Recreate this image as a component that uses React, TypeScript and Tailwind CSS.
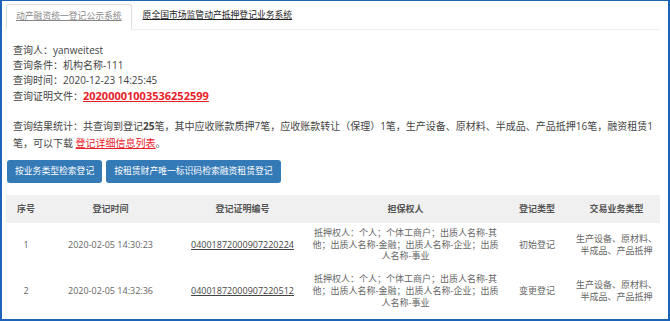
import React from "react";

const rows = [
  {
    no: "1",
    time: "2020-02-05 14:30:23",
    code: "04001872000907220224",
    type: "初始登记",
  },
  {
    no: "2",
    time: "2020-02-05 14:32:36",
    code: "04001872000907220512",
    type: "变更登记",
  },
];

export default function App() {
  return (
    <div className="w-[670px] h-[321px] bg-white border-[#1d63b8] border-x-2 border-t border-b-2 overflow-hidden font-['Open_Sans','Noto_Sans_CJK_SC',sans-serif] text-[#444]">
      <div className="pl-[4px] pr-[8px] pt-[3px]">
        {/* Tabs */}
        <div className="flex items-end h-[26px] border-b border-[#eeeeee]">
          <div className="h-[26px] -mb-px px-[9px] flex items-center border border-[#dddddd] border-b-white rounded-t-[3px] bg-white text-[8.8px] text-[#888] underline whitespace-nowrap">
            动产融资统一登记公示系统
          </div>
          <div className="h-[26px] pl-[11px] flex items-center text-[8.8px] text-[#222] underline whitespace-nowrap">
            原全国市场监管动产抵押登记业务系统
          </div>
        </div>

        {/* Info */}
        <div className="mt-[13px] pl-[7px] text-[10px] leading-[15px] whitespace-nowrap">
          <div>查询人：yanweitest</div>
          <div>查询条件：机构名称-111</div>
          <div>查询时间：2020-12-23 14:25:45</div>
          <div>
            查询证明文件：
            <span className="text-[11px] font-bold text-[#e8202a] underline">20200001003536252599</span>
          </div>
        </div>

        {/* Stats */}
        <div className="mt-[14px] pl-[7px] text-[10px] leading-[16.5px] whitespace-nowrap">
          <div>
            查询结果统计：共查询到登记<span className="font-bold">25</span>笔，其中应收账款质押7笔，应收账款转让（保理）1笔，生产设备、原材料、半成品、产品抵押16笔，融资租赁1
          </div>
          <div>
            笔，可以下载 <span className="text-[#e8202a] underline">登记详细信息列表</span>。
          </div>
        </div>

        {/* Buttons */}
        <div className="mt-[9px] ml-[1px] flex gap-[4px]">
          <div className="h-[23px] px-[8px] flex items-center rounded-[3px] bg-[#337ab7] text-white text-[8.8px] whitespace-nowrap">
            按业务类型检索登记
          </div>
          <div className="h-[23px] px-[8px] flex items-center rounded-[3px] bg-[#337ab7] text-white text-[8.8px] whitespace-nowrap">
            按租赁财产唯一标识码检索融资租赁登记
          </div>
        </div>

        {/* Table */}
        <table className="mt-[12px] w-[654px] table-fixed border-collapse text-[9px] text-[#666]">
          <colgroup>
            <col className="w-[40px]" />
            <col className="w-[129px]" />
            <col className="w-[135px]" />
            <col className="w-[191px]" />
            <col className="w-[72px]" />
            <col className="w-[87px]" />
          </colgroup>
          <thead>
            <tr className="h-[28px] bg-[#f0f0f0] text-[#555] font-bold">
              <th className="font-bold text-center">序号</th>
              <th className="font-bold text-center">登记时间</th>
              <th className="font-bold text-center">登记证明编号</th>
              <th className="font-bold text-center">担保权人</th>
              <th className="font-bold text-center">登记类型</th>
              <th className="font-bold text-center">交易业务类型</th>
            </tr>
          </thead>
          <tbody>
            {rows.map((r) => (
              <tr key={r.no} className="leading-[11.7px]">
                <td className="text-center align-middle pt-[4px] pb-[7px]">{r.no}</td>
                <td className="text-center align-middle pt-[4px] pb-[7px] whitespace-nowrap">{r.time}</td>
                <td className="text-center align-middle pt-[4px] pb-[7px]">
                  <span className="underline text-[#444]">{r.code}</span>
                </td>
                <td className="text-center align-middle pt-[4px] pb-[7px] whitespace-nowrap">
                  抵押权人：个人；个体工商户；出质人名称-其
                  <br />
                  他；出质人名称-金融；出质人名称-企业；出质
                  <br />
                  人名称-事业
                </td>
                <td className="text-center align-middle pt-[4px] pb-[7px]">{r.type}</td>
                <td className="text-center align-middle pt-[4px] pb-[7px] whitespace-nowrap">
                  生产设备、原材料、
                  <br />
                  半成品、产品抵押
                </td>
              </tr>
            ))}
          </tbody>
        </table>
      </div>
    </div>
  );
}
